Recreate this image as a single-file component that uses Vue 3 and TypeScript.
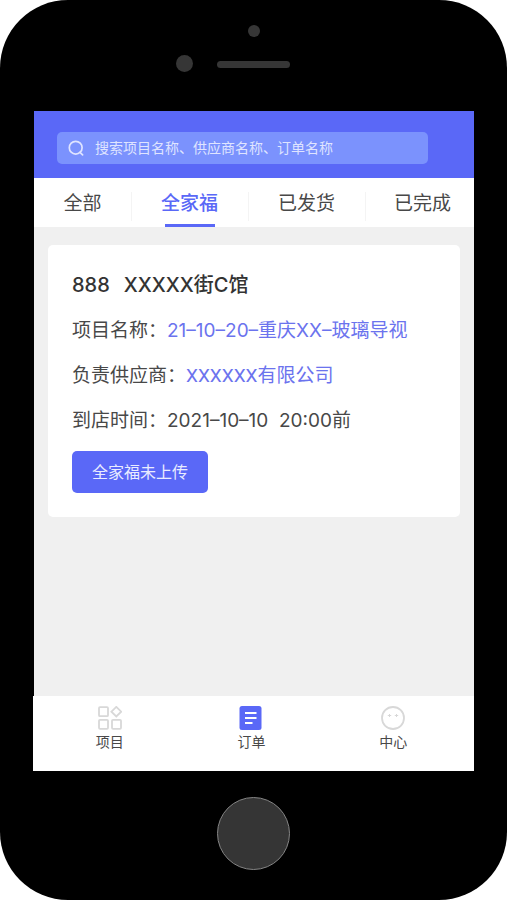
<script setup lang="ts">
import { ref } from 'vue'

interface Tab {
  id: string
  label: string
}

interface Field {
  label: string
  value: string
  kind: 'project' | 'company' | 'time'
}

const keyword = ref('')
const activeTab = ref('family')

const tabs: Tab[] = [
  { id: 'all', label: '全部' },
  { id: 'family', label: '全家福' },
  { id: 'shipped', label: '已发货' },
  { id: 'done', label: '已完成' },
]

const fields: Field[] = [
  { label: '项目名称：', value: '21–10–20–重庆XX–玻璃导视', kind: 'project' },
  { label: '负责供应商：', value: 'XXXXXX有限公司', kind: 'company' },
  { label: '到店时间：', value: '2021–10–10  20:00前', kind: 'time' },
]
</script>

<template>
  <div class="phone">
    <div class="phone-top">
      <span class="sensor"></span>
      <div class="speaker-row">
        <span class="camera"></span>
        <span class="speaker"></span>
      </div>
    </div>

    <div class="screen">
      <header class="header">
        <label class="search">
          <svg class="search-icon" viewBox="0 0 16 16" aria-hidden="true">
            <circle cx="7.7" cy="7.7" r="6.4" />
            <path d="M12 12.4L14.6 14.8" />
          </svg>
          <input
            v-model="keyword"
            class="search-input"
            type="text"
            aria-label="搜索"
            placeholder="搜索项目名称、供应商名称、订单名称"
          />
        </label>
      </header>

      <nav class="tabs">
        <button
          v-for="tab in tabs"
          :key="tab.id"
          type="button"
          class="tab"
          :class="{ active: tab.id === activeTab }"
          @click="activeTab = tab.id"
        >
          {{ tab.label }}
        </button>
      </nav>

      <main class="content">
        <article class="card">
          <h2 class="title">
            <span>888</span>
            <span>XXXXX街C馆</span>
          </h2>
          <dl class="fields">
            <div v-for="field in fields" :key="field.label" class="field">
              <dt>{{ field.label }}</dt>
              <dd :class="field.kind">{{ field.value }}</dd>
            </div>
          </dl>
          <button type="button" class="upload">全家福未上传</button>
        </article>
      </main>
    </div>

    <nav class="tabbar">
      <a class="item" href="#project">
        <svg class="icon" viewBox="0 0 24 24" aria-hidden="true">
          <g class="line">
            <rect x="1" y="1.2" width="9" height="9" rx="1" />
            <path d="M18.3 0.9L23.2 5.7L18.3 10.5L13.4 5.7Z" />
            <rect x="1" y="13.8" width="9" height="9" rx="1" />
            <rect x="14" y="13.8" width="9" height="9" rx="1" />
          </g>
        </svg>
        <span>项目</span>
      </a>
      <a class="item" href="#order">
        <svg class="icon" viewBox="0 0 24 24" aria-hidden="true">
          <rect class="solid" x="0.5" y="0" width="22" height="24" rx="2.5" />
          <path class="mark" d="M6 7H17.5M6 12H17.5M6 17H13.5" />
        </svg>
        <span>订单</span>
      </a>
      <a class="item" href="#center">
        <svg class="icon" viewBox="0 0 24 24" aria-hidden="true">
          <g class="line">
            <circle cx="12" cy="12" r="11" />
            <path d="M8.5 8V11M6.8 9.5H10.2M15.5 8V11M13.8 9.5H17.2" class="eyes" />
          </g>
        </svg>
        <span>中心</span>
      </a>
    </nav>

    <div class="phone-bottom">
      <button type="button" class="home" aria-label="Home"></button>
    </div>
  </div>
</template>

<style>
body {
  margin: 0;
  background: #fff;
}
</style>

<style scoped>
.phone {
  box-sizing: border-box;
  display: flex;
  flex-direction: column;
  min-height: 100vh;
  padding: 0 33px;
  border-radius: 68px;
  background: #000;
  color: #484848;
  font-family: Inter, "Noto Sans CJK SC", sans-serif;
}

button,
input {
  font-family: inherit;
}

button {
  cursor: pointer;
}

.phone-top {
  display: flex;
  flex-direction: column;
  align-items: center;
  gap: 18px;
  height: 86px;
  padding-top: 25px;
}

.sensor,
.camera {
  border-radius: 50%;
  background: #363636;
}

.sensor {
  width: 12px;
  height: 12px;
}

.speaker-row {
  display: flex;
  align-items: flex-end;
  gap: 24px;
  padding-right: 41px;
}

.camera {
  width: 17px;
  height: 17px;
}

.speaker {
  width: 73px;
  height: 7px;
  margin-bottom: 4px;
  border-radius: 4px;
  background: #363636;
}

.screen {
  display: flex;
  flex: 1;
  flex-direction: column;
  margin-left: 1px;
  background: #f0f0f0;
}

.header {
  padding: 21px 46px 14px 23px;
  background: #5a68f7;
}

.search {
  display: flex;
  align-items: center;
  gap: 11px;
  height: 32px;
  padding: 0 11px;
  border-radius: 5px;
  background: #7b92fd;
}

.search-icon {
  flex: none;
  width: 16px;
  height: 16px;
  fill: none;
  stroke: #dfe4ff;
  stroke-width: 1.7;
  stroke-linecap: round;
}

.search-input {
  flex: 1;
  min-width: 0;
  padding: 0;
  border: 0;
  outline: 0;
  background: transparent;
  color: #fff;
  font-size: 14px;
  line-height: 20px;
}

.search-input::placeholder {
  color: #dfe4ff;
  opacity: 1;
}

.tabs {
  display: grid;
  grid-template-columns: 97fr 117fr 117fr 109fr;
  height: 49px;
  background: #fff;
}

.tab {
  display: flex;
  position: relative;
  align-items: center;
  justify-content: center;
  padding: 2px 0 0;
  border: 0;
  background: none;
  color: #484848;
  font-size: 19px;
  line-height: 28px;
}

.tab + .tab::before {
  position: absolute;
  top: 14px;
  bottom: 6px;
  left: 0;
  width: 1px;
  background: #f4f4f4;
  content: "";
}

.tab:last-child {
  padding-left: 6px;
}

.tab.active {
  color: #5a68f7;
  font-weight: 500;
}

.tab.active::after {
  position: absolute;
  bottom: 0;
  left: 50%;
  width: 50px;
  height: 3px;
  margin-left: -25px;
  background: #5a68f7;
  content: "";
}

.content {
  flex: 1;
  padding: 18px 14px;
}

.card {
  padding: 24px;
  border-radius: 5px;
  background: #fff;
}

.title {
  display: flex;
  gap: 14px;
  margin: 0;
  color: #333;
  font-size: 20px;
  font-weight: 500;
  line-height: 32px;
}

.fields {
  display: flex;
  flex-direction: column;
  gap: 17px;
  margin: 16px 0;
}

.field {
  display: flex;
  font-size: 19px;
  line-height: 28px;
}

.field dd {
  margin: 0;
  white-space: pre-wrap;
}

.field .project,
.field .company {
  color: #6b73ee;
}

.field .company {
  font-family: Roboto, "Noto Sans CJK SC", sans-serif;
}

.upload {
  height: 42px;
  padding: 0 20px;
  border: 0;
  border-radius: 5px;
  background: #5a68f7;
  color: #e9ecff;
  font-size: 16px;
  line-height: 24px;
}

.tabbar {
  display: grid;
  grid-template-columns: repeat(3, 1fr);
  height: 75px;
  padding: 0 10px 0 6px;
  background: #fff;
}

.item {
  display: flex;
  flex-direction: column;
  align-items: center;
  gap: 2px;
  padding-top: 10px;
  color: #484848;
  font-size: 14px;
  line-height: 20px;
  text-decoration: none;
}

.icon {
  width: 24px;
  height: 24px;
}

.line {
  fill: none;
  stroke: #d8d8d8;
  stroke-width: 1.8;
}

.eyes {
  stroke-width: 1;
}

.solid {
  fill: #5a68f7;
}

.mark {
  fill: none;
  stroke: #fff;
  stroke-width: 2;
}

.phone-bottom {
  display: flex;
  justify-content: center;
  padding: 26px 0 30px;
}

.home {
  width: 73px;
  height: 73px;
  padding: 0;
  border: 1px solid #858585;
  border-radius: 50%;
  background: #353535;
}
</style>
